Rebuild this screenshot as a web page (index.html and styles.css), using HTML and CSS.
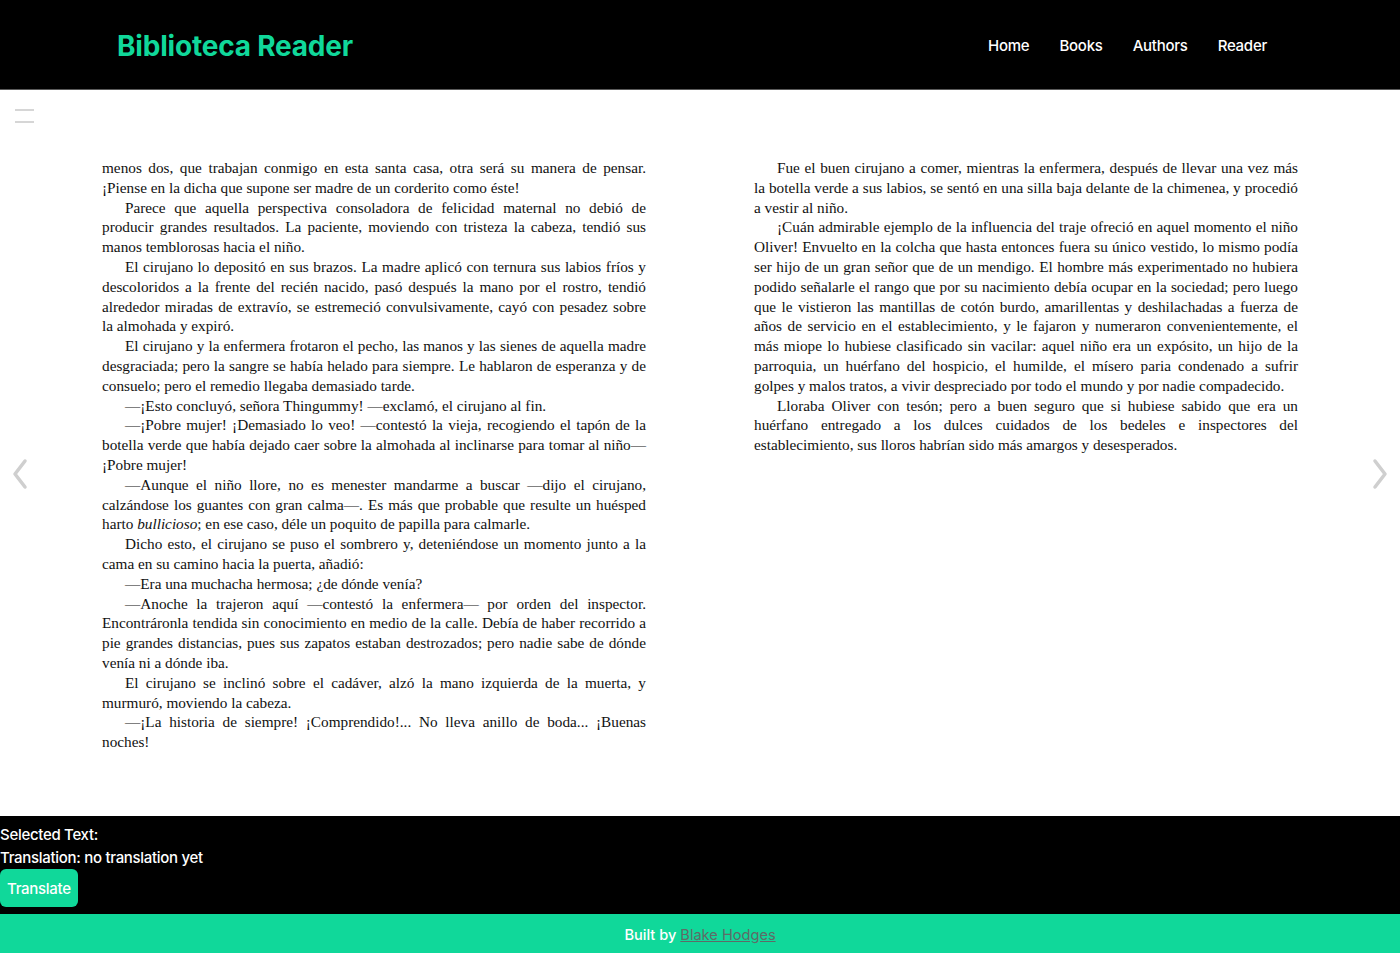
FILE: index.html
```html
<!DOCTYPE html>
<html lang="es">
<head>
<meta charset="utf-8">
<title>Biblioteca Reader</title>
<link rel="stylesheet" href="styles.css">
</head>
<body>
<header class="site-header">
  <a class="logo" href="#">Biblioteca Reader</a>
  <nav class="main-nav">
    <a href="#">Home</a>
    <a href="#">Books</a>
    <a href="#">Authors</a>
    <a href="#">Reader</a>
  </nav>
</header>

<main class="reader">
  <div class="toolbar">
    <button class="toc-toggle" aria-label="Table of contents"><span></span><span></span></button>
  </div>
  <div class="book-row">
    <button class="arrow" aria-label="Previous page">
      <svg width="18" height="32" viewBox="0 0 18 32"><path d="M14 3 L4 16 L14 29" fill="none" stroke="#cfcfcf" stroke-width="3.5" stroke-linecap="round" stroke-linejoin="round"/></svg>
    </button>
    <div class="pages">
      <div class="page">
        <p class="cont">menos dos, que trabajan conmigo en esta santa casa, otra será su manera de pensar. ¡Piense en la dicha que supone ser madre de un corderito como éste!</p>
        <p>Parece que aquella perspectiva consoladora de felicidad maternal no debió de producir grandes resultados. La paciente, moviendo con tristeza la cabeza, tendió sus manos temblorosas hacia el niño.</p>
        <p>El cirujano lo depositó en sus brazos. La madre aplicó con ternura sus labios fríos y descoloridos a la frente del recién nacido, pasó después la mano por el rostro, tendió alrededor miradas de extravío, se estremeció convulsivamente, cayó con pesadez sobre la almohada y expiró.</p>
        <p>El cirujano y la enfermera frotaron el pecho, las manos y las sienes de aquella madre desgraciada; pero la sangre se había helado para siempre. Le hablaron de esperanza y de consuelo; pero el remedio llegaba demasiado tarde.</p>
        <p>—¡Esto concluyó, señora Thingummy! —exclamó, el cirujano al fin.</p>
        <p>—¡Pobre mujer! ¡Demasiado lo veo! —contestó la vieja, recogiendo el tapón de la botella verde que había dejado caer sobre la almohada al inclinarse para tomar al niño—¡Pobre mujer!</p>
        <p>—Aunque el niño llore, no es menester mandarme a buscar —dijo el cirujano, calzándose los guantes con gran calma—. Es más que probable que resulte un huésped harto <i>bullicioso</i>; en ese caso, déle un poquito de papilla para calmarle.</p>
        <p>Dicho esto, el cirujano se puso el sombrero y, deteniéndose un momento junto a la cama en su camino hacia la puerta, añadió:</p>
        <p>—Era una muchacha hermosa; ¿de dónde venía?</p>
        <p>—Anoche la trajeron aquí —contestó la enfermera— por orden del inspector. Encontráronla tendida sin conocimiento en medio de la calle. Debía de haber recorrido a pie grandes distancias, pues sus zapatos estaban destrozados; pero nadie sabe de dónde venía ni a dónde iba.</p>
        <p>El cirujano se inclinó sobre el cadáver, alzó la mano izquierda de la muerta, y murmuró, moviendo la cabeza.</p>
        <p>—¡La historia de siempre! ¡Comprendido!... No lleva anillo de boda... ¡Buenas noches!</p>
      </div>
      <div class="page">
        <p>Fue el buen cirujano a comer, mientras la enfermera, después de llevar una vez más la botella verde a sus labios, se sentó en una silla baja delante de la chimenea, y procedió a vestir al niño.</p>
        <p>¡Cuán admirable ejemplo de la influencia del traje ofreció en aquel momento el niño Oliver! Envuelto en la colcha que hasta entonces fuera su único vestido, lo mismo podía ser hijo de un gran señor que de un mendigo. El hombre más experimentado no hubiera podido señalarle el rango que por su nacimiento debía ocupar en la sociedad; pero luego que le vistieron las mantillas de cotón burdo, amarillentas y deshilachadas a fuerza de años de servicio en el establecimiento, y le fajaron y numeraron convenientemente, el más miope lo hubiese clasificado sin vacilar: aquel niño era un expósito, un hijo de la parroquia, un huérfano del hospicio, el humilde, el mísero paria condenado a sufrir golpes y malos tratos, a vivir despreciado por todo el mundo y por nadie compadecido.</p>
        <p>Lloraba Oliver con tesón; pero a buen seguro que si hubiese sabido que era un huérfano entregado a los dulces cuidados de los bedeles e inspectores del establecimiento, sus lloros habrían sido más amargos y desesperados.</p>
      </div>
    </div>
    <button class="arrow" aria-label="Next page">
      <svg width="18" height="32" viewBox="0 0 18 32"><path d="M4 3 L14 16 L4 29" fill="none" stroke="#cfcfcf" stroke-width="3.5" stroke-linecap="round" stroke-linejoin="round"/></svg>
    </button>
  </div>
</main>

<section class="translate-panel">
  <div class="line">Selected Text:</div>
  <div class="line">Translation: no translation yet</div>
  <button class="translate-btn">Translate</button>
</section>

<footer class="site-footer">
  Built by <a href="#">Blake Hodges</a>
</footer>
</body>
</html>
```

FILE: styles.css
```css
* { box-sizing: border-box; }

html, body {
  margin: 0;
  padding: 0;
}

body {
  font-family: Inter, "Noto Sans", "Liberation Sans", sans-serif;
  background: #fff;
  color: #000;
}

.site-header {
  height: 90px;
  background: #000;
  border-bottom: 1px solid #5a5a5a;
  display: flex;
  align-items: center;
  justify-content: space-between;
  padding: 0 133px 0 117px;
}

.logo {
  color: #10d89a;
  font-weight: 700;
  font-size: 28px;
  letter-spacing: -0.2px;
  text-decoration: none;
  margin-top: 2px;
}

.main-nav {
  display: flex;
  gap: 30px;
  margin-top: 2px;
}

.main-nav a {
  color: #fff;
  font-size: 15px;
  font-weight: 500;
  text-decoration: none;
  letter-spacing: -0.25px;
}

.reader {
  height: 726px;
  display: flex;
  flex-direction: column;
}

.toolbar {
  height: 41px;
  padding: 19px 0 0 15px;
}

.toc-toggle {
  width: 20px;
  height: 14px;
  padding: 0;
  border: 0;
  background: transparent;
  display: flex;
  flex-direction: column;
  justify-content: space-between;
  cursor: pointer;
}

.toc-toggle span {
  display: block;
  width: 19px;
  height: 2px;
  background: #d6d6d6;
}

.book-row {
  flex: 1;
  display: grid;
  grid-template-columns: 40px 1fr 40px;
}

.arrow {
  border: 0;
  background: transparent;
  padding: 0;
  display: flex;
  align-items: center;
  justify-content: center;
  cursor: pointer;
}

.pages {
  display: flex;
  justify-content: center;
  gap: 108px;
  padding-top: 27px;
}

.page {
  width: 544px;
  font-family: "Liberation Serif", "Times New Roman", serif;
  font-size: 15.25px;
  line-height: 19.8px;
  color: #111;
  text-align: justify;
}

.page p {
  margin: 0;
  text-indent: 23px;
}

.page p.cont {
  text-indent: 0;
}

.translate-panel {
  height: 98px;
  background: #000;
  color: #fff;
  padding-top: 7px;
  font-size: 15px;
  font-weight: 500;
}

.translate-panel .line {
  line-height: 23px;
  letter-spacing: -0.3px;
}

.translate-btn {
  margin-top: 0;
  height: 38px;
  padding: 0 7px;
  border: 0;
  border-radius: 6px;
  background: #10d89a;
  color: #fff;
  font-family: Inter, "Noto Sans", sans-serif;
  font-size: 15px;
  font-weight: 500;
  letter-spacing: -0.3px;
  cursor: pointer;
}

.site-footer {
  height: 39px;
  background: #10d89a;
  color: #fff;
  font-size: 14.6px;
  font-weight: 500;
  display: flex;
  align-items: center;
  justify-content: center;
  gap: 4px;
  padding-top: 2px;
}

.site-footer a {
  color: #5f6b67;
  font-weight: 400;
}
```
